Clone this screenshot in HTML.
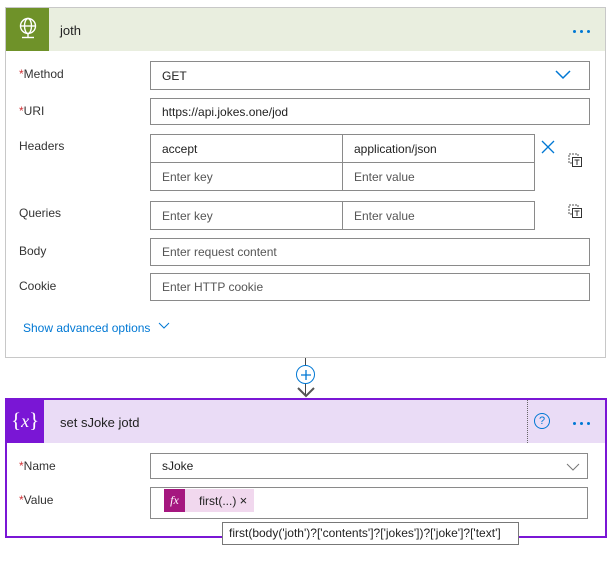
<!DOCTYPE html>
<html><head><style>
body{margin:0;width:614px;height:576px;background:#fff;font-family:"Liberation Sans",sans-serif;font-size:12px;color:#222;position:relative;overflow:hidden}
.a{position:absolute;box-sizing:border-box}
.in{position:absolute;box-sizing:border-box;border:1px solid #8a8a8a;background:#fff;padding-left:11px;display:flex;align-items:center;font-size:12px;color:#222}
.ph{color:#555}
.lab{position:absolute;font-size:12px;color:#333}
.st{color:#d13438}
.dots{position:absolute;width:20px;height:4px}
.dots i{position:absolute;top:0;width:3px;height:3px;border-radius:50%;background:#0078d4}
</style></head><body>
<div class="a" style="left:5px;top:7px;width:601px;height:351px;border:1px solid #c8c8c8"></div>
<div class="a" style="left:6px;top:8px;width:599px;height:43px;background:#e9eedf"></div>
<div class="a" style="left:6px;top:8px;width:43px;height:43px;background:#6f9229"></div>
<svg class="a" style="left:16px;top:16px" width="24" height="24" viewBox="0 0 24 24" fill="none" stroke="#fff" stroke-width="1.4"><circle cx="12" cy="10" r="7.5"/><ellipse cx="12" cy="10" rx="3.5" ry="7.5"/><line x1="4.5" y1="10" x2="19.5" y2="10"/><line x1="12" y1="17.5" x2="12" y2="21"/><line x1="6" y1="21.5" x2="18" y2="21.5"/></svg>
<div class="a" style="left:60px;top:23px;font-size:13px">joth</div>
<div class="dots" style="left:573px;top:30px"><i style="left:0"></i><i style="left:7px"></i><i style="left:14px"></i></div>

<div class="lab" style="left:19px;top:67px"><span class="st">*</span>Method</div>
<div class="in" style="left:150px;top:61px;width:440px;height:29px">GET</div>
<svg class="a" style="left:555px;top:70px" width="16" height="10"><path d="M1 1l7 7 7-7" fill="none" stroke="#0078d4" stroke-width="1.5"/></svg>
<div class="lab" style="left:19px;top:104px"><span class="st">*</span>URI</div>
<div class="in" style="left:150px;top:98px;width:440px;height:27px">https://api.jokes.one/jod</div>

<div class="lab" style="left:19px;top:139px">Headers</div>
<div class="in" style="left:150px;top:134px;width:193px;height:29px">accept</div>
<div class="in" style="left:342px;top:134px;width:193px;height:29px">application/json</div>
<div class="in" style="left:150px;top:162px;width:193px;height:29px"><span class="ph">Enter key</span></div>
<div class="in" style="left:342px;top:162px;width:193px;height:29px"><span class="ph">Enter value</span></div>
<svg class="a" style="left:541px;top:140px" width="14" height="14"><path d="M1 1l12 12M13 1L1 13" stroke="#0078d4" stroke-width="1.3"/></svg>
<svg class="a" style="left:568px;top:153px" width="16" height="16"><rect x="1" y="1" width="9" height="9" fill="none" stroke="#555" stroke-dasharray="2 1"/><rect x="4.5" y="4.5" width="9" height="9" fill="#fff" stroke="#333"/><path d="M6.5 7h5M9 7v5" stroke="#333"/></svg>
<div class="lab" style="left:19px;top:206px">Queries</div>
<div class="in" style="left:150px;top:201px;width:193px;height:29px"><span class="ph">Enter key</span></div>
<div class="in" style="left:342px;top:201px;width:193px;height:29px"><span class="ph">Enter value</span></div>
<svg class="a" style="left:568px;top:204px" width="16" height="16"><rect x="1" y="1" width="9" height="9" fill="none" stroke="#555" stroke-dasharray="2 1"/><rect x="4.5" y="4.5" width="9" height="9" fill="#fff" stroke="#333"/><path d="M6.5 7h5M9 7v5" stroke="#333"/></svg>
<div class="lab" style="left:19px;top:244px">Body</div>
<div class="in" style="left:150px;top:238px;width:440px;height:28px"><span class="ph">Enter request content</span></div>
<div class="lab" style="left:19px;top:279px">Cookie</div>
<div class="in" style="left:150px;top:273px;width:440px;height:28px"><span class="ph">Enter HTTP cookie</span></div>
<div class="a" style="left:23px;top:321px;color:#0078d4">Show advanced options</div>
<svg class="a" style="left:158px;top:322px" width="12" height="8"><path d="M1 1l5 5 5-5" fill="none" stroke="#0078d4"/></svg>

<div class="a" style="left:305px;top:358px;width:1px;height:8px;background:#444"></div>
<div class="a" style="left:296px;top:365px;width:19px;height:19px;border:1px solid #0078d4;border-radius:50%;background:#fff"></div>
<svg class="a" style="left:300px;top:369px" width="12" height="12"><path d="M6 1v10M1 6h10" stroke="#0078d4" stroke-width="1.3"/></svg>
<div class="a" style="left:305px;top:384px;width:1px;height:12px;background:#444"></div>
<svg class="a" style="left:296px;top:386px" width="20" height="12"><path d="M2 2l8 8 8-8" fill="none" stroke="#555" stroke-width="2"/></svg>

<div class="a" style="left:5px;top:398px;width:602px;height:140px;border:2px solid #7a16d5"></div>
<div class="a" style="left:7px;top:400px;width:598px;height:43px;background:#eadcf6"></div>
<div class="a" style="left:527px;top:400px;width:0;height:43px;border-left:1px dotted #666"></div>
<div class="a" style="left:7px;top:400px;width:37px;height:43px;background:#7a16d5"></div>
<div class="a" style="left:11px;top:408px;color:#fff;font-family:'Liberation Serif',serif;font-size:18px"><span style="font-size:21px">{</span><i>x</i><span style="font-size:21px">}</span></div>
<div class="a" style="left:60px;top:415px;font-size:13px">set sJoke jotd</div>
<div class="a" style="left:534px;top:413px;width:16px;height:16px;border:1.5px solid #0078d4;border-radius:50%;color:#0078d4;font-size:11px;text-align:center;line-height:14px">?</div>
<div class="dots" style="left:573px;top:422px"><i style="left:0"></i><i style="left:7px"></i><i style="left:14px"></i></div>

<div class="lab" style="left:19px;top:459px"><span class="st">*</span>Name</div>
<div class="in" style="left:150px;top:453px;width:438px;height:26px">sJoke</div>
<svg class="a" style="left:566px;top:463px" width="14" height="8"><path d="M1 1l6 6 6-6" fill="none" stroke="#777"/></svg>
<div class="lab" style="left:19px;top:493px"><span class="st">*</span>Value</div>
<div class="in" style="left:150px;top:487px;width:438px;height:32px"></div>
<div class="a" style="left:164px;top:489px;width:21px;height:23px;background:#a5177f;color:#fff;font-family:'Liberation Serif',serif;font-style:italic;font-size:12px;text-align:center;line-height:23px">fx</div>
<div class="a" style="left:185px;top:489px;width:69px;height:23px;background:#f1d8ee;line-height:23px;padding-left:14px">first(...) <span style="font-size:13px">×</span></div>
<div class="a" style="left:222px;top:522px;width:297px;height:23px;border:1px solid #777;background:#fff;line-height:21px;padding-left:6px;font-size:12px">first(body('joth')?['contents']?['jokes'])?['joke']?['text']</div>
</body></html>
